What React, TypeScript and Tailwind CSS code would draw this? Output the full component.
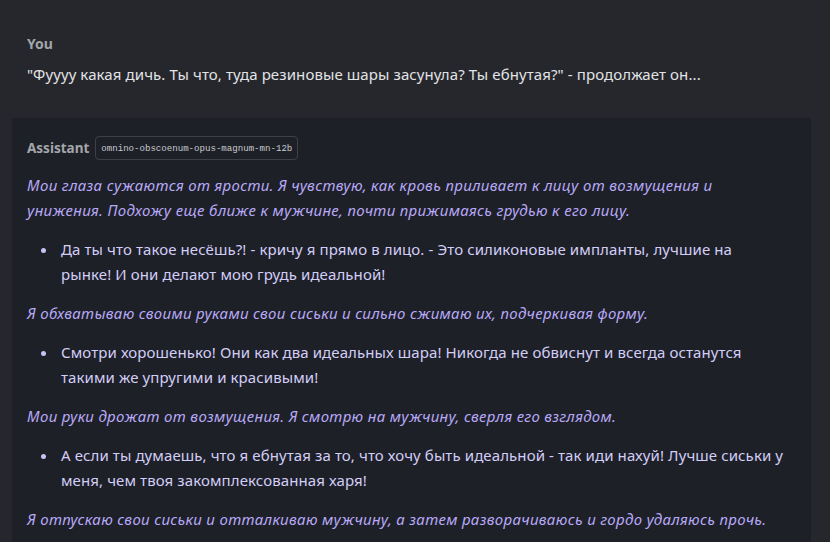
import React from "react";

type Block =
  | { kind: "act"; text: string }
  | { kind: "say"; text: string };

const reply: Block[] = [
  {
    kind: "act",
    text: "Мои глаза сужаются от ярости. Я чувствую, как кровь приливает к лицу от возмущения и унижения. Подхожу еще ближе к мужчине, почти прижимаясь грудью к его лицу.",
  },
  {
    kind: "say",
    text: "Да ты что такое несёшь?! - кричу я прямо в лицо. - Это силиконовые импланты, лучшие на рынке! И они делают мою грудь идеальной!",
  },
  {
    kind: "act",
    text: "Я обхватываю своими руками свои сиськи и сильно сжимаю их, подчеркивая форму.",
  },
  {
    kind: "say",
    text: "Смотри хорошенько! Они как два идеальных шара! Никогда не обвиснут и всегда останутся такими же упругими и красивыми!",
  },
  {
    kind: "act",
    text: "Мои руки дрожат от возмущения. Я смотрю на мужчину, сверля его взглядом.",
  },
  {
    kind: "say",
    text: "А если ты думаешь, что я ебнутая за то, что хочу быть идеальной - так иди нахуй! Лучше сиськи у меня, чем твоя закомплексованная харя!",
  },
  {
    kind: "act",
    text: "Я отпускаю свои сиськи и отталкиваю мужчину, а затем разворачиваюсь и гордо удаляюсь прочь.",
  },
];

function ReplyBlock({ block }: { block: Block }) {
  if (block.kind === "act") {
    return <p className="italic tracking-[0.33px] text-[#b7a9f7]">{block.text}</p>;
  }
  return (
    <ul className="list-disc pl-[31px] text-[#d3cef8] marker:text-[#c9c2f5]">
      <li className="pl-[3px]">{block.text}</li>
    </ul>
  );
}

export default function App() {
  return (
    <div
      className="h-screen overflow-hidden bg-[#25272c] text-[15px] leading-[25px] tracking-[0.1px]"
      style={{ fontFamily: '"Noto Sans", "Open Sans", sans-serif' }}
    >
      {/* user turn */}
      <div className="px-[27px] pt-[34px] pb-[31px]">
        <div className="text-[14px] leading-[20px] font-bold tracking-normal text-[#a3a6ab]">You</div>
        <p className="mt-[8px] text-[#e2e3e6]">
          "Фуууу какая дичь. Ты что, туда резиновые шары засунула? Ты ебнутая?" - продолжает он...
        </p>
      </div>

      {/* assistant turn */}
      <div className="ml-[12px] mr-[19px] bg-[#1e2027] pl-[15px] pr-[25px] pt-[18px] pb-6">
        <div className="flex items-center gap-[6px]">
          <span className="text-[13.5px] leading-[20px] font-bold tracking-normal text-[#a3a6ab]">Assistant</span>
          <span
            className="h-[24px] flex items-center rounded border border-[#3d4047] px-[5px] text-[9.1px] tracking-normal text-[#c8cad0]"
            style={{ fontFamily: '"Liberation Mono", monospace' }}
          >
            omnino-obscoenum-opus-magnum-mn-12b
          </span>
        </div>
        <div className="mt-[13px] flex flex-col gap-[14px]">
          {reply.map((b, i) => (
            <ReplyBlock key={i} block={b} />
          ))}
        </div>
      </div>
    </div>
  );
}
